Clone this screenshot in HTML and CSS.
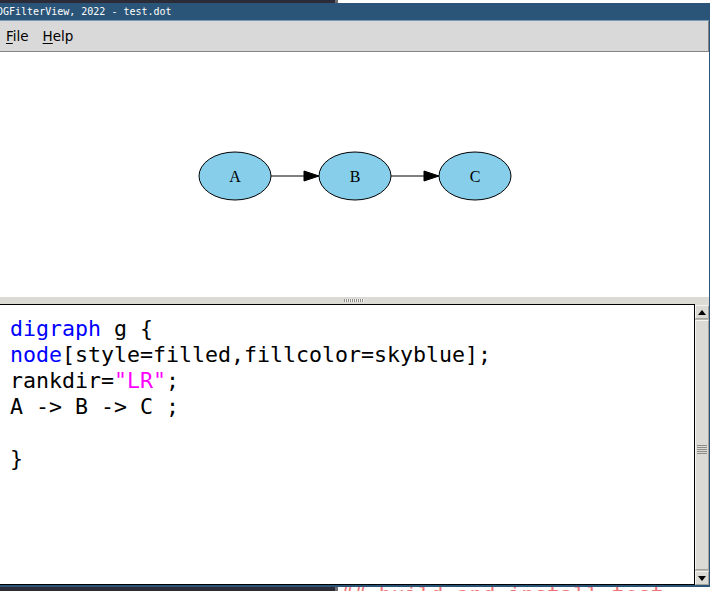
FILE: index.html
```html
<!DOCTYPE html>
<html lang="en">
<head>
    <meta charset="UTF-8">
    <meta name="viewport" content="width=device-width, initial-scale=1.0">
    <title>DGFilterView, 2022 - test.dot</title>
    <link rel="stylesheet" href="styles.css">
</head>
<body>
    <div class="desk desk-top">
        <div class="desk-dark"></div>
        <div class="desk-sep"></div>
        <div class="desk-light"></div>
    </div>

    <div class="window">
        <div class="titlebar">
            <span class="title">DGFilterView, 2022 - test.dot</span>
        </div>

        <div class="menubar">
            <span class="menu"><u>F</u>ile</span>
            <span class="menu"><u>H</u>elp</span>
        </div>

        <div class="canvas">
            <svg class="graph" width="320" height="52" viewBox="0 0 320 52">
                <ellipse cx="40" cy="26" rx="36" ry="24" fill="#87ceeb" stroke="#000" stroke-width="1"/>
                <ellipse cx="160" cy="26" rx="36" ry="24" fill="#87ceeb" stroke="#000" stroke-width="1"/>
                <ellipse cx="280" cy="26" rx="36" ry="24" fill="#87ceeb" stroke="#000" stroke-width="1"/>
                <line x1="76" y1="26" x2="110" y2="26" stroke="#000" stroke-width="1"/>
                <polygon points="109,21 124,26 109,31" fill="#000" stroke="#000" stroke-width="1"/>
                <line x1="196" y1="26" x2="230" y2="26" stroke="#000" stroke-width="1"/>
                <polygon points="229,21 244,26 229,31" fill="#000" stroke="#000" stroke-width="1"/>
                <text x="40" y="31.5" class="label">A</text>
                <text x="160" y="31.5" class="label">B</text>
                <text x="280" y="31.5" class="label">C</text>
            </svg>
        </div>

        <div class="sash"><span class="grip"></span></div>

        <div class="editor">
<pre class="code"><span class="kw">digraph</span> g {
<span class="kw">node</span>[style=filled,fillcolor=skyblue];
rankdir=<span class="str">"LR"</span>;
A -&gt; B -&gt; C ;

}</pre>
            <div class="scrollbar">
                <div class="sb-btn"><span class="arrow up"></span></div>
                <div class="sb-trough">
                    <div class="sb-slider"><span class="sb-grip"></span></div>
                </div>
                <div class="sb-btn"><span class="arrow down"></span></div>
            </div>
        </div>
    </div>

    <div class="desk desk-bottom">
        <div class="desk-dark"></div>
        <div class="desk-sep"></div>
        <div class="desk-light"><span class="peek">## build and install test</span></div>
    </div>
</body>
</html>
```

FILE: styles.css
```css
* {
    margin: 0;
    padding: 0;
    box-sizing: border-box;
}

body {
    width: 710px;
    height: 591px;
    overflow: hidden;
    background: #fff;
    font-family: 'DejaVu Sans', sans-serif;
}

/* desktop strips peeking above and below the window */
.desk {
    display: flex;
    overflow: hidden;
}

.desk-top {
    height: 3px;
}

.desk-bottom {
    height: 4px;
}

.desk-dark {
    width: 335px;
    background: #2b2c37;
}

.desk-sep {
    width: 3px;
    background: #6e6e74;
}

.desk-light {
    flex: 1;
    background: #fff;
    overflow: hidden;
}

.peek {
    display: block;
    margin: -5px 0 0 2px;
    font-family: 'DejaVu Sans Mono', monospace;
    font-size: 21.5px;
    line-height: 26px;
    color: #f07378;
    white-space: pre;
}

/* window */
.window {
    border-right: 1px solid #2a5578;
    border-bottom: 2px solid #2a5578;
}

.titlebar {
    height: 18px;
    background: #2a5578;
    border-bottom: 1px solid #7c9cb6;
    overflow: hidden;
}

.title {
    display: block;
    margin-left: -3px;
    font-family: 'DejaVu Sans Mono', monospace;
    font-size: 10px;
    line-height: 17px;
    color: #fff;
    white-space: pre;
}

.menubar {
    height: 31px;
    display: flex;
    align-items: center;
    gap: 14px;
    padding-left: 6px;
    background: #d9d9d9;
    border-bottom: 1px solid #858585;
    border-right: 1px solid #858585;
    font-size: 13.5px;
    color: #000;
}

.menu u {
    text-decoration-thickness: 1px;
    text-underline-offset: 2px;
}

.canvas {
    height: 245px;
    padding-top: 98px;
    display: flex;
    justify-content: center;
    background: #fff;
}

.graph {
    display: block;
}

.label {
    font-family: 'Liberation Serif', serif;
    font-size: 16px;
    text-anchor: middle;
    fill: #000;
}

.sash {
    height: 7px;
    background: #dcdad5;
    display: flex;
    justify-content: center;
    align-items: center;
}

.grip {
    width: 20px;
    height: 3px;
    margin-left: -1px;
    background: repeating-linear-gradient(90deg, #8e8c86 0 1px, #f4f3f0 1px 2px);
}

/* text editor */
.editor {
    height: 281px;
    display: flex;
}

.code {
    flex: 1;
    border: 1px solid #000;
    border-left: none;
    padding: 11px 0 0 10px;
    background: #fff;
    font-family: 'DejaVu Sans Mono', monospace;
    font-size: 21.6px;
    line-height: 26px;
    color: #000;
    overflow: hidden;
}

.kw {
    color: #0000ff;
}

.str {
    color: #ff00ff;
}

.scrollbar {
    width: 14px;
    display: flex;
    flex-direction: column;
    background: #dcdad5;
    border-top: 1px solid #dcdad5;
}

.sb-btn {
    height: 14px;
    display: flex;
    align-items: center;
    justify-content: center;
    background: #dcdad5;
    border: 1px solid #f4f3f0;
    border-right-color: #a5a39d;
    border-bottom-color: #a5a39d;
}

.arrow {
    width: 0;
    height: 0;
    border-left: 4px solid transparent;
    border-right: 4px solid transparent;
}

.arrow.up {
    border-bottom: 5px solid #000;
}

.arrow.down {
    border-top: 5px solid #000;
}

.sb-trough {
    flex: 1;
    display: flex;
    padding: 1px 0;
    background: #bab8b2;
}

.sb-slider {
    flex: 1;
    display: flex;
    align-items: center;
    justify-content: center;
    background: #dcdad5;
    border: 1px solid #f4f3f0;
    border-right-color: #a5a39d;
    border-bottom-color: #a5a39d;
}

.sb-grip {
    width: 10px;
    height: 9px;
    margin-top: 8px;
    background: repeating-linear-gradient(180deg, #8e8c86 0 1px, #dcdad5 1px 2px);
}
```
